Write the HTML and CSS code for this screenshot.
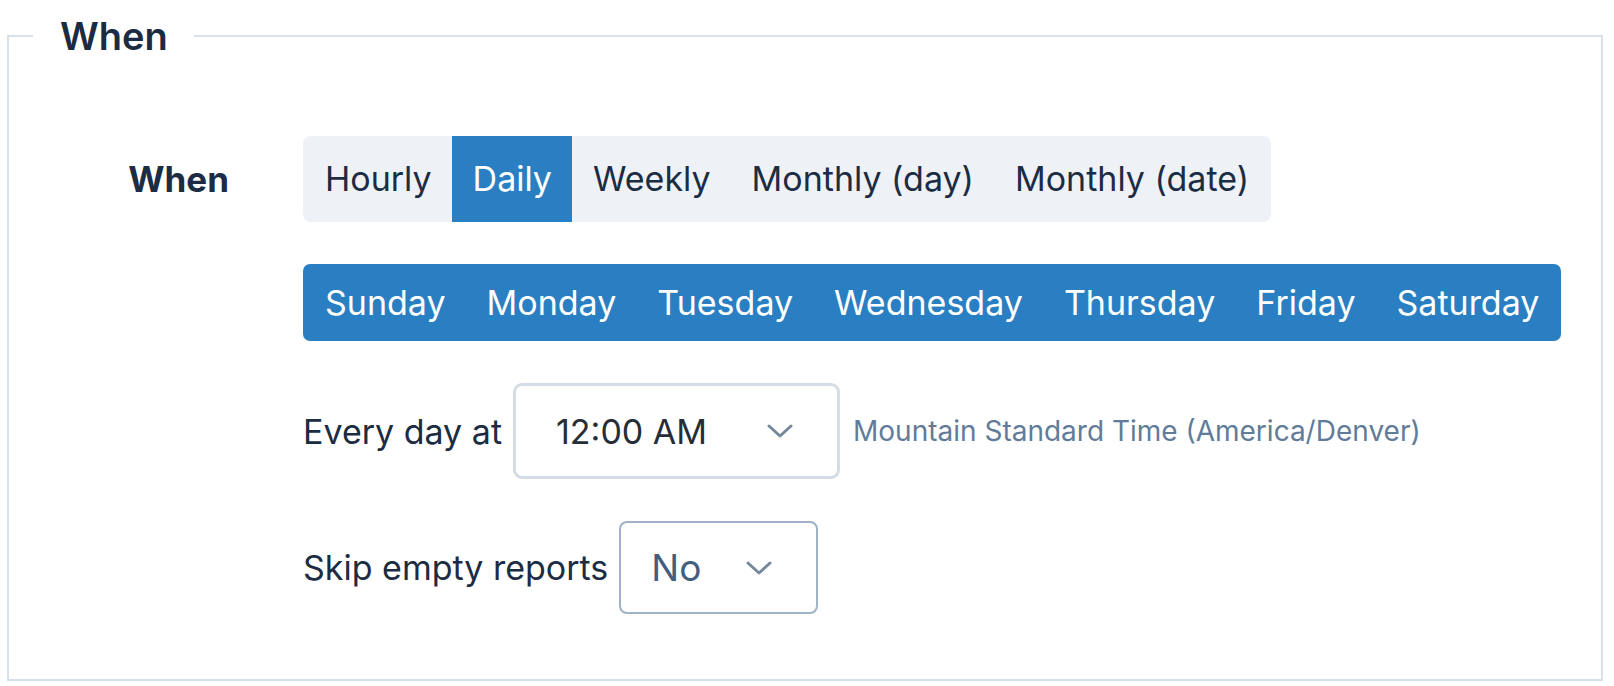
FILE: index.html
```html
<!DOCTYPE html>
<html>
<head>
<meta charset="utf-8">
<link rel="stylesheet" href="styles.css">
</head>
<body>
<div class="page">
  <fieldset class="panel">
    <legend class="panel-title">When</legend>
    <div class="form-row">
      <div class="form-label">When</div>
      <div class="form-controls">
        <div class="seg">
          <span class="seg-item">Hourly</span>
          <span class="seg-item active">Daily</span>
          <span class="seg-item">Weekly</span>
          <span class="seg-item">Monthly (day)</span>
          <span class="seg-item">Monthly (date)</span>
        </div>
        <div class="days">
          <span class="day">Sunday</span>
          <span class="day">Monday</span>
          <span class="day">Tuesday</span>
          <span class="day">Wednesday</span>
          <span class="day">Thursday</span>
          <span class="day">Friday</span>
          <span class="day">Saturday</span>
        </div>
        <div class="line">
          <span class="line-label">Every day at</span>
          <div class="select select-time">
            <span class="select-value">12:00 AM</span>
            <svg class="chev" width="26" height="14" viewBox="0 0 26 14"><polyline points="2,2 13,12 24,2" fill="none" stroke="#76889b" stroke-width="3" stroke-linecap="round" stroke-linejoin="round"/></svg>
          </div>
          <span class="tz">Mountain Standard Time (America/Denver)</span>
        </div>
        <div class="line">
          <span class="line-label">Skip empty reports</span>
          <div class="select select-no">
            <span class="select-value">No</span>
            <svg class="chev" width="26" height="14" viewBox="0 0 26 14"><polyline points="2,2 13,12 24,2" fill="none" stroke="#76889b" stroke-width="3" stroke-linecap="round" stroke-linejoin="round"/></svg>
          </div>
        </div>
      </div>
    </div>
  </fieldset>
</div>
</body>
</html>
```
FILE: styles.css
```css
html, body {
  margin: 0;
  padding: 0;
  background: #ffffff;
}
body {
  font-family: Inter, "Noto Sans", sans-serif;
  color: #1c2c43;
}
.page {
  padding: 12px 11px 5px 7px;
}
.panel {
  margin: 0;
  border: 2px solid #d8e1ea;
  padding: 76px 24px 65px 24px;
  min-width: 0;
}
.panel-title {
  padding: 0 26px 0 27px;
  font-size: 38px;
  line-height: 48px;
  font-weight: 600;
  color: #1b2b42;
}
.form-row {
  display: flex;
  align-items: flex-start;
}
.form-label {
  width: 196px;
  text-align: right;
  font-weight: 700;
  font-size: 35px;
  line-height: 86px;
  margin-right: 74px;
  flex-shrink: 0;
}
.form-controls {
  display: flex;
  flex-direction: column;
  align-items: flex-start;
  gap: 42px;
}
.seg {
  display: flex;
  background: #eef2f7;
  border-radius: 8px;
  height: 86px;
  overflow: hidden;
}
.seg-item {
  padding: 0 20.5px;
  font-size: 34px;
  line-height: 86px;
  color: #1c2c43;
}
.seg-item:first-child {
  padding-left: 22px;
}
.seg-item:last-child {
  padding-right: 22px;
}
.seg-item.active {
  background: #2a7fc2;
  color: #ffffff;
}
.days {
  display: flex;
  background: #2a7fc2;
  border-radius: 7px;
  height: 77px;
}
.day {
  padding: 0 20.5px;
  font-size: 34px;
  line-height: 77px;
  color: #ffffff;
}
.day:first-child {
  padding-left: 22px;
}
.day:last-child {
  padding-right: 22px;
}
.line {
  display: flex;
  align-items: center;
}
.line-label {
  font-size: 34px;
  color: #1c2c43;
  margin-right: 11px;
}
.select {
  display: flex;
  align-items: center;
  justify-content: space-between;
  box-sizing: border-box;
  background: #ffffff;
}
.select-time {
  width: 327px;
  height: 96px;
  border: 3px solid #d4dde6;
  border-radius: 9px;
  padding: 0 44px 0 40px;
}
.select-time .select-value {
  font-size: 34px;
  color: #262d36;
}
.select-no {
  width: 199px;
  height: 93px;
  border: 2px solid #9fb2c7;
  border-radius: 8px;
  padding: 0 44px 0 30px;
}
.select-no .select-value {
  font-size: 37px;
  color: #435d7c;
}
.chev {
  display: block;
}
.tz {
  margin-left: 13px;
  font-size: 28px;
  color: #617b9a;
}
```
